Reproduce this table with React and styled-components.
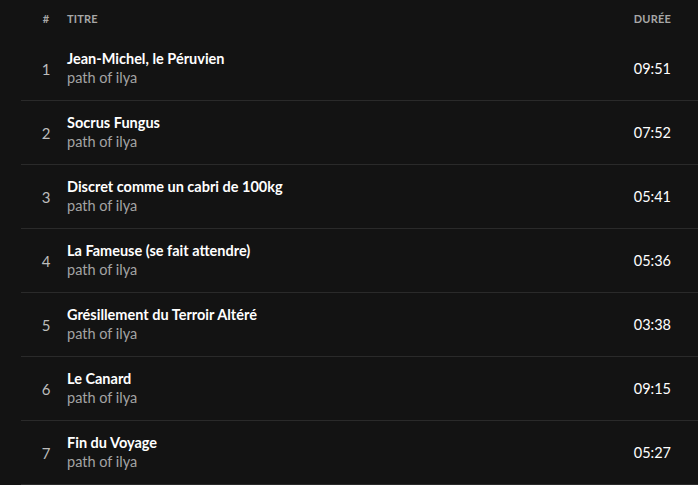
import React from "react";
import styled, { createGlobalStyle } from "styled-components";

const tracks = [
  { title: "Jean-Michel, le Péruvien", artist: "path of ilya", duration: "09:51" },
  { title: "Socrus Fungus", artist: "path of ilya", duration: "07:52" },
  { title: "Discret comme un cabri de 100kg", artist: "path of ilya", duration: "05:41" },
  { title: "La Fameuse (se fait attendre)", artist: "path of ilya", duration: "05:36" },
  { title: "Grésillement du Terroir Altéré", artist: "path of ilya", duration: "03:38" },
  { title: "Le Canard", artist: "path of ilya", duration: "09:15" },
  { title: "Fin du Voyage", artist: "path of ilya", duration: "05:27" },
];

export default function App() {
  return (
    <>
      <GlobalStyle />
      <TrackList>
        <HeaderRow>
          <HeaderCell $center>#</HeaderCell>
          <HeaderCell>Titre</HeaderCell>
          <HeaderCell $right>Durée</HeaderCell>
        </HeaderRow>
        {tracks.map((track, i) => (
          <TrackRow key={track.title}>
            <TrackNumber>{i + 1}</TrackNumber>
            <TrackInfo>
              <TrackTitle>{track.title}</TrackTitle>
              <TrackArtist>{track.artist}</TrackArtist>
            </TrackInfo>
            <TrackDuration>{track.duration}</TrackDuration>
          </TrackRow>
        ))}
      </TrackList>
    </>
  );
}

const GlobalStyle = createGlobalStyle`
  body {
    margin: 0;
    background: #131313;
    font-family: Lato, "Noto Sans", sans-serif;
    color: #fff;
  }
`;

const TrackList = styled.div`
  padding-left: 21px;
  height: 485px;
  overflow: hidden;
`;

const Columns = styled.div`
  display: grid;
  grid-template-columns: 46px 1fr auto;
  align-items: center;
  padding-right: 27px;
`;

const HeaderRow = styled(Columns)`
  height: 37px;
  padding-bottom: 1px;
  box-sizing: border-box;
`;

const HeaderCell = styled.div`
  font-size: 11px;
  font-weight: 700;
  letter-spacing: 0.2px;
  text-transform: uppercase;
  color: #a7a7a7;
  text-align: ${(p) => (p.$center ? "center" : p.$right ? "right" : "left")};
  padding-left: ${(p) => (p.$center ? "4px" : "0")};
`;

const TrackRow = styled(Columns)`
  height: 64px;
  box-sizing: border-box;
  border-bottom: 1px solid #2a2a2a;
`;

const TrackNumber = styled.div`
  font-size: 15px;
  color: #bdbdbd;
  text-align: center;
  padding-left: 4px;
`;

const TrackInfo = styled.div`
  display: flex;
  flex-direction: column;
  gap: 1px;
  padding-bottom: 1px;
`;

const TrackTitle = styled.div`
  font-size: 14.5px;
  line-height: 18px;
  font-weight: 700;
  color: #fff;
`;

const TrackArtist = styled.div`
  font-size: 14.5px;
  line-height: 18px;
  color: #a3a3a3;
`;

const TrackDuration = styled.div`
  font-size: 14.5px;
  color: #fff;
  text-align: right;
`;
